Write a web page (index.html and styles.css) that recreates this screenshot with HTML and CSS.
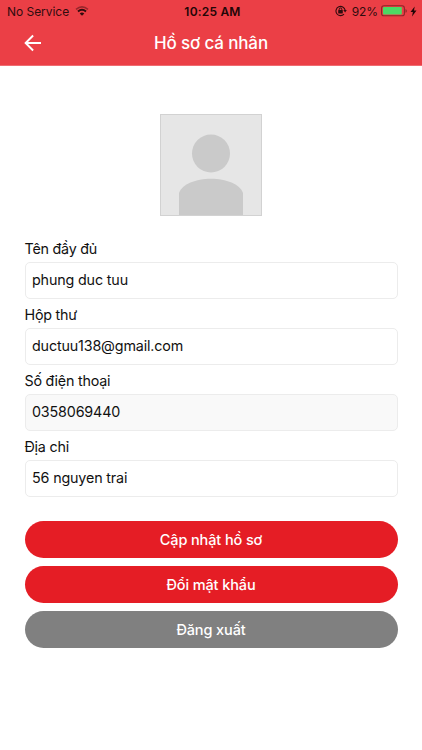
FILE: index.html
```html
<!DOCTYPE html>
<html lang="vi">
<head>
<meta charset="utf-8">
<meta name="viewport" content="width=device-width, initial-scale=1">
<title>Hồ sơ cá nhân</title>
<link rel="stylesheet" href="styles.css">
</head>
<body>
<header class="header">
  <div class="status">
    <div class="status-left">
      <span class="carrier">No Service</span>
      <svg class="wifi" width="14" height="10" viewBox="0 0 14 10" fill="none" stroke="#300c0e">
        <path d="M1 3.4Q7-1.6 13 3.4" stroke-width="1.5" opacity=".45"/>
        <path d="M3 5.5Q7 2 11 5.5" stroke-width="2"/>
        <path d="M7 9.7 4.7 7.4Q7 5.6 9.3 7.4Z" fill="#300c0e" stroke="none"/>
      </svg>
    </div>
    <span class="time">10:25 AM</span>
    <div class="status-right">
      <svg class="lock" width="12" height="12" viewBox="0 0 12 12" fill="none" stroke="#300c0e">
        <path d="M9 9.1A4.6 4.6 0 1 1 10.1 5.2" stroke-width="1.1"/>
        <path d="M8.3 5.1h3.5L10.1 7.5Z" fill="#300c0e" stroke="none"/>
        <rect x="3.2" y="5" width="4.6" height="3.5" rx=".4" fill="#300c0e" stroke="none"/>
        <path d="M4.2 5.4V4.3a1.3 1.3 0 0 1 2.6 0v1.1" stroke-width="1"/>
      </svg>
      <span class="percent">92%</span>
      <svg class="battery" width="26" height="12" viewBox="0 0 26 12">
        <rect x=".6" y=".8" width="22.8" height="10" rx="2.4" fill="none" stroke="#8c2529" stroke-width="1.1"/>
        <rect x="2" y="2.1" width="18.8" height="7.4" rx=".8" fill="#4cd964"/>
        <path d="M24.5 4v3.8q1.3-.6 1.3-1.9T24.5 4Z" fill="#8c2529"/>
      </svg>
      <svg class="bolt" width="7" height="11" viewBox="0 0 7 11"><path d="M4.7.4.5 6h2.4L2 10.6 6.5 4.6H4Z" fill="#210607"/></svg>
    </div>
  </div>
  <div class="navbar">
    <svg class="back" width="18" height="18" viewBox="0 0 18 18" fill="none" stroke="#fff" stroke-width="1.9"><path d="M17 9H2M9.1 1.5 1.6 9l7.5 7.5"/></svg>
    <h1 class="title">Hồ sơ cá nhân</h1>
  </div>
</header>
<main class="profile">
  <svg class="avatar" width="102" height="102" viewBox="0 0 102 102">
    <rect x=".5" y=".5" width="101" height="101" fill="#e6e6e6" stroke="#d2d2d2"/>
    <circle cx="51" cy="39.5" r="19" fill="#cacaca"/>
    <path d="M19 101V79C22 70 36 64.7 51 64.7S80 70 83 79v22Z" fill="#cacaca"/>
  </svg>
  <form class="form">
    <label class="field"><span class="label">Tên đầy đủ</span><span class="input">phung duc tuu</span></label>
    <label class="field"><span class="label">Hộp thư</span><span class="input">ductuu138@gmail.com</span></label>
    <label class="field"><span class="label">Số điện thoại</span><span class="input disabled">0358069440</span></label>
    <label class="field"><span class="label">Địa chỉ</span><span class="input">56 nguyen trai</span></label>
  </form>
  <div class="actions">
    <button class="button" type="button">Cập nhật hồ sơ</button>
    <button class="button" type="button">Đổi mật khẩu</button>
    <button class="button logout" type="button">Đăng xuất</button>
  </div>
</main>
</body>
</html>
```
FILE: styles.css
```css
* { box-sizing: border-box; }
body {
  margin: 0;
  background: #fff;
  color: #111;
  font-family: Inter, "Liberation Sans", sans-serif;
}
.header { height: 66px; background: #eb3f46; border-bottom: 1px solid #ef6c71; }
.status {
  display: grid;
  grid-template-columns: 1fr auto 1fr;
  align-items: center;
  height: 22px;
  padding: 0 5px 0 7px;
  color: #300c0e;
  font-size: 12px;
}
.status-left, .status-right { display: flex; align-items: center; }
.status-right { justify-content: flex-end; }
.carrier { letter-spacing: -.04px; }
.wifi { margin-left: 6px; }
.time { padding-left: 1px; color: #210607; font-weight: 600; letter-spacing: .2px; }
.percent { letter-spacing: -.1px; }
.lock { margin-right: 5px; }
.battery { margin: 0 3px 0 3px; }
.navbar {
  display: grid;
  grid-template-columns: 40px 1fr 40px;
  align-items: center;
  height: 42px;
}
.back { margin-left: 24px; }
.title {
  margin: 0;
  color: #fff;
  font-size: 17px;
  font-weight: 500;
  letter-spacing: -.15px;
  text-align: center;
}
.profile { display: flex; flex-direction: column; padding: 48px 24.5px 0; }
.avatar { align-self: center; }
.form { display: flex; flex-direction: column; gap: 4.2px; margin-top: 20.5px; }
.field { display: block; }
.label {
  display: block;
  height: 25px;
  font-size: 14.3px;
  letter-spacing: -.22px;
  line-height: 24px;
}
.input {
  display: block;
  height: 37px;
  padding: 0 6.5px;
  border: 1px solid #ececec;
  border-radius: 5px;
  font-size: 14.3px;
  letter-spacing: -.15px;
  line-height: 34px;
}
.disabled { background: #f9f9f9; }
.actions { display: flex; flex-direction: column; gap: 8px; margin-top: 24.3px; }
.button {
  height: 37px;
  padding: 0;
  border: 0;
  border-radius: 19px;
  background: #e51d25;
  color: #fff;
  font: 500 14.5px/37px Inter, "Liberation Sans", sans-serif;
  letter-spacing: -.12px;
}
.logout { background: #808080; }
```
